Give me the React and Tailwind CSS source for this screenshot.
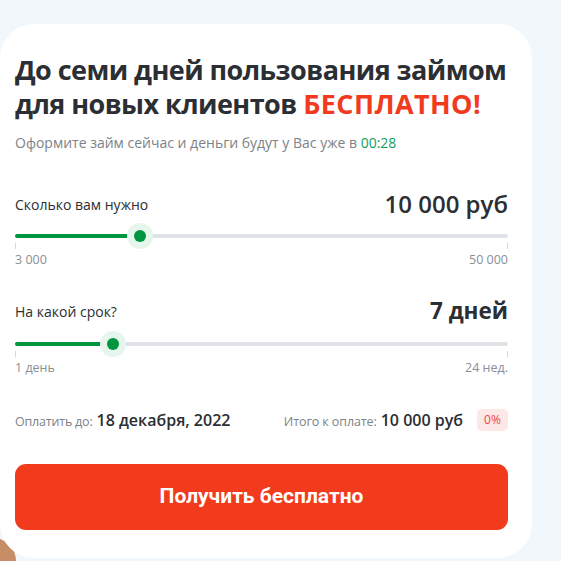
import React from 'react';

const Slider = ({ fill, min, max }) => (
  <div>
    <div className="relative h-[28px]">
      <div className="absolute left-0 right-0 top-[12px] h-[4px] rounded-full bg-[#dfe3e8]" />
      <div
        className="absolute left-0 top-[12px] h-[4px] rounded-full bg-[#009640]"
        style={{ width: fill }}
      />
      <div
        className="absolute top-[1px] h-[26px] w-[26px] -translate-x-1/2 rounded-full bg-[#e7f6ed]"
        style={{ left: fill }}
      />
      <div
        className="absolute top-[8px] h-[12px] w-[12px] -translate-x-1/2 rounded-full bg-[#009640]"
        style={{ left: fill }}
      />
      <div className="absolute left-0 top-[21px] h-[6px] w-px bg-[#d5d8dc]" />
      <div className="absolute right-0 top-[21px] h-[6px] w-px bg-[#d5d8dc]" />
    </div>
    <div className="mt-[2px] flex justify-between text-[12.5px] leading-[16px] text-[#8a8f96]">
      <span>{min}</span>
      <span>{max}</span>
    </div>
  </div>
);

export default function App() {
  return (
    <div
      className="relative h-[561px] w-[561px] overflow-hidden bg-[#f1f7fa]"
      style={{ fontFamily: '"Open Sans", sans-serif' }}
    >
      {/* photo edge peeking out behind the card */}
      <div className="absolute left-[-30px] top-[538px] h-[60px] w-[46px] rounded-full bg-[#c78d67]" />

      <div className="relative mt-[24px] h-[534px] w-[532px] rounded-[34px] bg-white pl-[15px] pr-[24px] pt-[29px]">
        <h1 className="whitespace-nowrap text-[27px] font-bold leading-[34px] tracking-[-0.55px] text-[#2b2e33]">
          До семи дней пользования займом
          <br />
          для новых клиентов <span className="tracking-[0.4px] text-[#f23a1e]">БЕСПЛАТНО!</span>
        </h1>
        <p className="mt-[12px] text-[14px] leading-[20px] text-[#7d8288]">
          Оформите займ сейчас и деньги будут у Вас уже в{' '}
          <span className="text-[#10a05e]">00:28</span>
        </p>

        <div className="mt-[37px] flex h-[28px] items-center justify-between">
          <span className="text-[14px] text-[#2b2e33]">Сколько вам нужно</span>
          <span className="text-[24px] font-semibold text-[#2b2e33]">10 000 руб</span>
        </div>
        <div className="mt-[4px]">
          <Slider fill={125} min="3 000" max="50 000" />
        </div>

        <div className="mt-[29px] flex h-[28px] items-center justify-between">
          <span className="text-[14px] text-[#2b2e33]">На какой срок?</span>
          <span className="text-[22.5px] font-bold text-[#2b2e33]">7 дней</span>
        </div>
        <div className="mt-[5px]">
          <Slider fill={98} min="1 день" max="24 нед." />
        </div>

        <div className="mt-[32px] flex h-[24px] items-center justify-between">
          <div className="flex items-baseline gap-[4px]">
            <span className="text-[12.5px] tracking-[-0.2px] text-[#7d8288]">Оплатить до:</span>
            <span className="text-[16px] font-semibold text-[#2b2e33]">18 декабря, 2022</span>
          </div>
          <div className="flex items-baseline">
            <span className="text-[12.5px] tracking-[-0.1px] text-[#7d8288]">Итого к оплате:</span>
            <span className="ml-[4px] text-[16px] font-semibold text-[#2b2e33]">10 000 руб</span>
            <span className="ml-[14px] flex h-[22px] w-[31px] items-center justify-center self-center rounded-[5px] bg-[#fde8e8] text-[12px] text-[#ef4444]">
              0%
            </span>
          </div>
        </div>

        <button
          className="mt-[32px] flex h-[66px] w-full items-center justify-center rounded-[11px] bg-[#f23a1c] text-[21px] font-bold text-white"
          style={{ fontFamily: 'Roboto, sans-serif' }}
        >
          Получить бесплатно
        </button>
      </div>
    </div>
  );
}
